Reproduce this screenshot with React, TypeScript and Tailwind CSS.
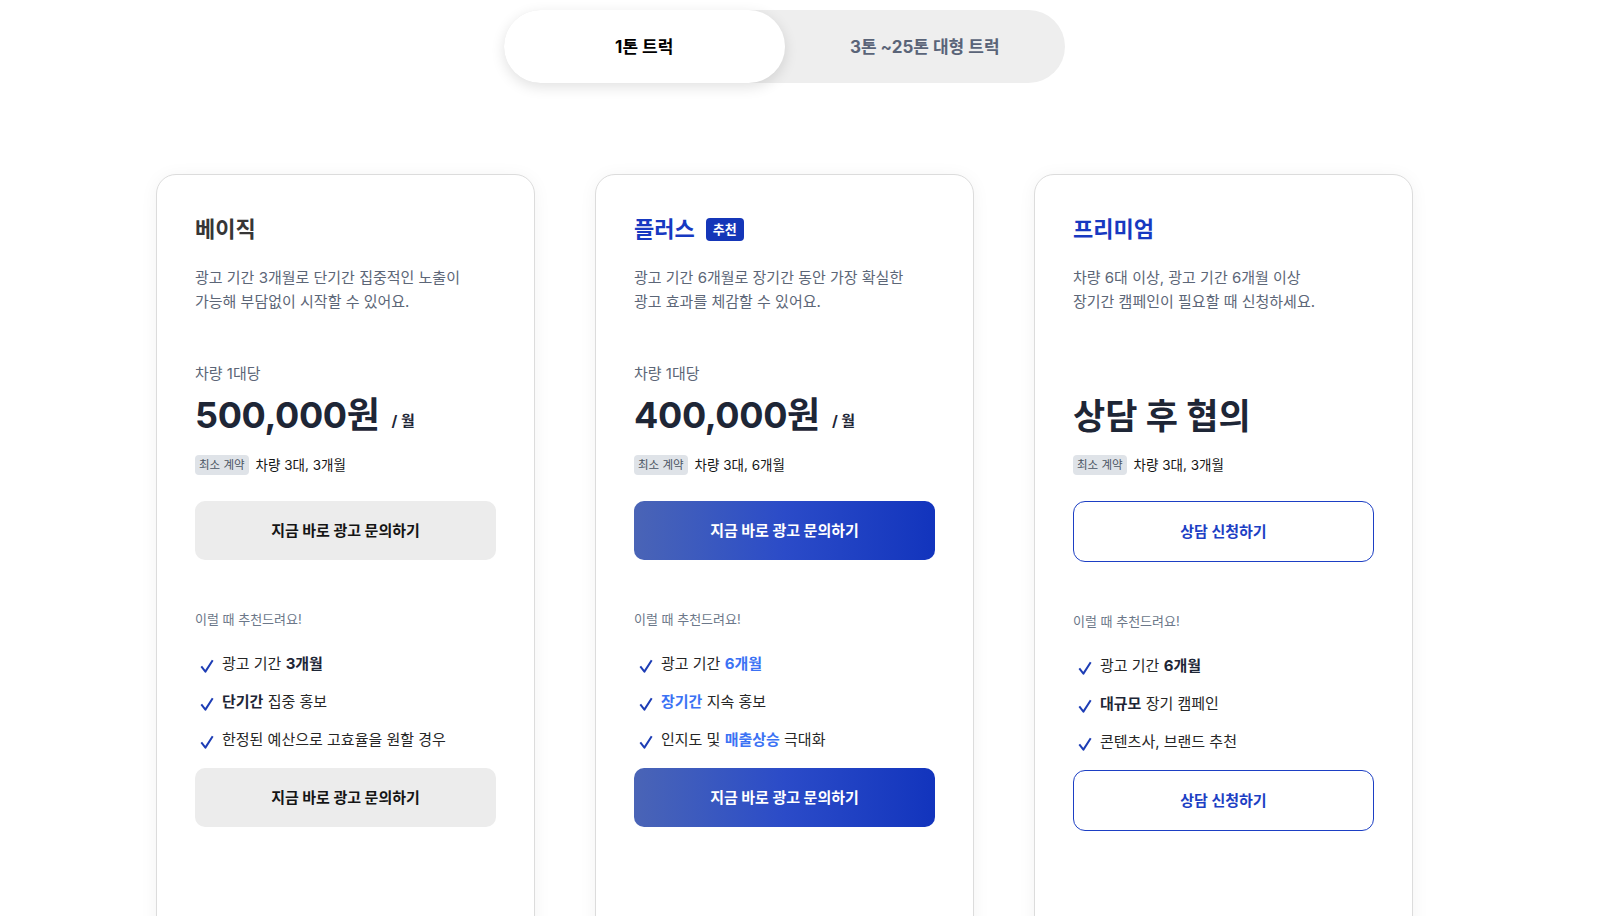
import { useState } from "react";

type Seg = { t: string; s?: "bold" | "blue" };

type Plan = {
  name: string;
  tag?: string;
  nameColor: string;
  desc: string[];
  perUnit?: string;
  price?: string;
  priceText?: string;
  minimum: string;
  cta: string;
  variant: "gray" | "blue" | "outline";
  points: Seg[][];
};

const plans: Plan[] = [
  {
    name: "베이직",
    nameColor: "text-[#363636]",
    desc: ["광고 기간 3개월로 단기간 집중적인 노출이", "가능해 부담없이 시작할 수 있어요."],
    perUnit: "차량 1대당",
    price: "500,000원",
    minimum: "차량 3대, 3개월",
    cta: "지금 바로 광고 문의하기",
    variant: "gray",
    points: [
      [{ t: "광고 기간 " }, { t: "3개월", s: "bold" }],
      [{ t: "단기간", s: "bold" }, { t: " 집중 홍보" }],
      [{ t: "한정된 예산으로 고효율을 원할 경우" }],
    ],
  },
  {
    name: "플러스",
    tag: "추천",
    nameColor: "text-[#1739c1]",
    desc: ["광고 기간 6개월로 장기간 동안 가장 확실한", "광고 효과를 체감할 수 있어요."],
    perUnit: "차량 1대당",
    price: "400,000원",
    minimum: "차량 3대, 6개월",
    cta: "지금 바로 광고 문의하기",
    variant: "blue",
    points: [
      [{ t: "광고 기간 " }, { t: "6개월", s: "blue" }],
      [{ t: "장기간", s: "blue" }, { t: " 지속 홍보" }],
      [{ t: "인지도 및 " }, { t: "매출상승", s: "blue" }, { t: " 극대화" }],
    ],
  },
  {
    name: "프리미엄",
    nameColor: "text-[#1739c1]",
    desc: ["차량 6대 이상, 광고 기간 6개월 이상", "장기간 캠페인이 필요할 때 신청하세요."],
    priceText: "상담 후 협의",
    minimum: "차량 3대, 3개월",
    cta: "상담 신청하기",
    variant: "outline",
    points: [
      [{ t: "광고 기간 " }, { t: "6개월", s: "bold" }],
      [{ t: "대규모", s: "bold" }, { t: " 장기 캠페인" }],
      [{ t: "콘텐츠사, 브랜드 추천" }],
    ],
  },
];

const CheckMark = () => (
  <svg
    className="w-[14px] h-[14px] shrink-0 translate-y-[2px]"
    viewBox="0 0 14 14"
    fill="none"
    stroke="#1d3db5"
    strokeWidth="2"
    strokeLinejoin="round"
  >
    <path d="M1.3 7.4 5.4 12.6 12.7 1.2" />
  </svg>
);

const CtaButton = ({ plan }: { plan: Plan }) => {
  if (plan.variant === "outline") {
    return (
      <button className="w-full h-[61px] rounded-[12px] border border-[#1d3fc4] bg-white text-[#1d3fc4] text-[15px] font-bold">
        {plan.cta}
      </button>
    );
  }
  if (plan.variant === "blue") {
    return (
      <button className="w-full h-[59px] rounded-[10px] bg-linear-to-r from-[#4a64b6] via-[#2b4bc8] to-[#1234bd] text-white text-[15px] font-bold">
        {plan.cta}
      </button>
    );
  }
  return (
    <button className="w-full h-[59px] rounded-[10px] bg-[#ececec] text-[#151515] text-[15px] font-bold">
      {plan.cta}
    </button>
  );
};

const PlanCard = ({ plan }: { plan: Plan }) => (
  <div className="rounded-[20px] border border-[#dcdcdc] bg-white shadow-[0_2px_18px_rgba(0,0,0,0.05)] px-[38px] pt-[38px] pb-[120px]">
    {/* Title */}
    <div className="flex items-center gap-[11px] h-[32px]">
      <h3 className={`text-[22px] leading-[32px] font-bold ${plan.nameColor}`}>{plan.name}</h3>
      {plan.tag && (
        <span className="h-[23px] px-[7px] rounded-[4px] bg-[#1536b8] text-white text-[13px] font-bold leading-[23px]">
          {plan.tag}
        </span>
      )}
    </div>

    <p className="mt-[21px] text-[15px] leading-[24px] text-[#5c6677]">
      {plan.desc[0]}
      <br />
      {plan.desc[1]}
    </p>

    {/* Price */}
    <div className="mt-[49px] h-[22px] text-[15px] leading-[22px] text-[#5c6677]">
      {plan.perUnit}
    </div>
    <div className="mt-[8px] h-[44px] flex items-end">
      {plan.price ? (
        <>
          <span className="text-[36px] leading-[44px] font-bold tracking-[-0.01em] text-[#1e2636]">
            {plan.price}
          </span>
          <span className="ml-[12px] mb-[6px] text-[15px] leading-[20px] font-bold text-[#1e2636]">
            / 월
          </span>
        </>
      ) : (
        <span className="text-[35px] leading-[42px] font-bold text-[#1e2636]">{plan.priceText}</span>
      )}
    </div>

    <div className="mt-[18px] flex items-center gap-[7px]">
      <span className="h-[20px] px-[4px] rounded-[4px] bg-[#dfe3e8] text-[11.5px] leading-[20px] text-[#4b5563]">
        최소 계약
      </span>
      <span className="text-[13.5px] text-[#151515]">{plan.minimum}</span>
    </div>

    <div className="mt-[26px]">
      <CtaButton plan={plan} />
    </div>

    <div className="mt-[49px] text-[13px] leading-[20px] text-[#6b7789]">이럴 때 추천드려요!</div>

    <ul className="mt-[23px] flex flex-col gap-[14px]">
      {plan.points.map((segs, i) => (
        <li key={i} className="flex items-center gap-[8px] pl-[5px] h-[24px] text-[15px] leading-[24px] text-[#262626]">
          <CheckMark />
          <span>
            {segs.map((seg, j) => (
              <span
                key={j}
                className={
                  seg.s === "bold"
                    ? "font-bold text-[#1e2636]"
                    : seg.s === "blue"
                    ? "font-bold text-[#3b72f4]"
                    : ""
                }
              >
                {seg.t}
              </span>
            ))}
          </span>
        </li>
      ))}
    </ul>

    <div className="mt-[16px]">
      <CtaButton plan={plan} />
    </div>
  </div>
);

export default function App() {
  const [tab, setTab] = useState(0);
  const tabs = ["1톤 트럭", "3톤 ~25톤 대형 트럭"];

  return (
    <div className="min-h-screen bg-white font-['Inter','Noto_Sans_CJK_KR',sans-serif] overflow-hidden">
      <div className="ml-[156px] w-[1257px] pt-[10px]">
        {/* Truck size toggle */}
        <div className="mx-auto w-[561px] h-[73px] rounded-full bg-[#eeeeee] grid grid-cols-2">
          {tabs.map((label, i) => (
            <button
              key={label}
              onClick={() => setTab(i)}
              className={
                tab === i
                  ? "h-full pt-[2px] rounded-full bg-white shadow-[0_4px_14px_rgba(0,0,0,0.12)] text-[17px] font-bold text-black"
                  : "h-full pt-[2px] rounded-full text-[17px] font-bold text-[#5a6478]"
              }
            >
              {label}
            </button>
          ))}
        </div>

        {/* Plans */}
        <div className="mt-[91px] grid grid-cols-3 gap-[60px]">
          {plans.map((p) => (
            <PlanCard key={p.name} plan={p} />
          ))}
        </div>
      </div>
    </div>
  );
}
